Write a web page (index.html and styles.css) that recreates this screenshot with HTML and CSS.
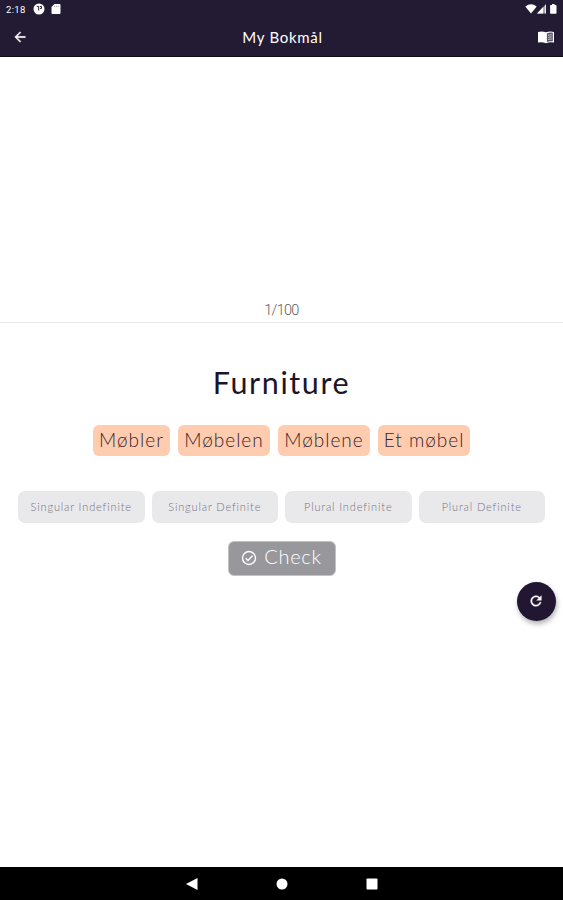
FILE: index.html
```html
<!DOCTYPE html>
<html lang="en">
<head>
    <meta charset="UTF-8">
    <meta name="viewport" content="width=device-width, initial-scale=1.0">
    <title>My Bokmål</title>
    <link rel="stylesheet" href="styles.css">
</head>
<body>
    <header>
        <div class="status-bar">
            <span class="time">2:18</span>
            <svg class="status-app" width="12" height="12" viewBox="0 0 12 12">
                <circle cx="6" cy="6" r="5.5" fill="#fff"/>
                <path d="M3.8 3.4h1.9v4M7 3.4h1.5v2H7" fill="none" stroke="#231a33" stroke-width="1"/>
            </svg>
            <svg class="status-card" width="10" height="12" viewBox="0 0 10 12">
                <path d="M3.4 1H8.6q.9 0 .9 .9v8.2q0 .9-.9 .9H1.4q-.9 0-.9-.9V4z" fill="#fff"/>
                <path d="M3.6 2.6v1.6M5.4 2.6v1.6M7.2 2.6v1.6" stroke="#8b8594" stroke-width=".7"/>
            </svg>
            <svg class="status-signals" width="34" height="12" viewBox="0 0 34 12">
                <path d="M.3 3.4Q6 -1 11.7 3.4L6 10.5z" fill="#fff"/>
                <path d="M21 1v9.5h-9z" fill="#aaa6b0"/>
                <path d="M18 4.2v6.3h-6z" fill="#fff"/>
                <path d="M20.5 2v8.5" stroke="#fff" stroke-width=".7"/>
                <path d="M27 1h2.6v1h1.2q.7 0 .7 .7v7.4q0 .7-.7 .7h-5q-.7 0-.7-.7V2.7q0-.7 .7-.7H27z" fill="#fff"/>
            </svg>
        </div>
        <div class="app-bar">
            <svg width="16" height="16" viewBox="0 0 24 24" fill="#fff" stroke="#fff" stroke-width=".5">
                <path d="M20 11H7.83l5.59-5.59L12 4l-8 8 8 8 1.41-1.41L7.83 13H20z"/>
            </svg>
            <h1>My Bokmål</h1>
            <svg width="18" height="16" viewBox="0 0 18 16">
                <path d="M1 3q4-1.2 8 .2 4-1.4 8-.2v10.6q-4-1-8 .6-4-1.6-8-.6z" fill="#fff"/>
                <path d="M9.9 4.4q3-1.2 5.9-.6v8.5q-3-.5-5.9 .6z" fill="#5c5566"/>
                <path d="M11 6.3q2-.6 3.9-.4M11 8.4q2-.6 3.9-.4M11 10.5q2-.6 3.9-.4" fill="none" stroke="#ddd" stroke-width=".8"/>
            </svg>
        </div>
    </header>

    <main>
        <div class="progress">1/100</div>

        <h2>Furniture</h2>

        <div class="words">
            <span class="word word-short">Møbler</span>
            <span class="word">Møbelen</span>
            <span class="word">Møblene</span>
            <span class="word">Et møbel</span>
        </div>

        <div class="slots">
            <div class="slot">Singular Indefinite</div>
            <div class="slot">Singular Definite</div>
            <div class="slot">Plural Indefinite</div>
            <div class="slot">Plural Definite</div>
        </div>

        <button class="btn-check" type="button">
            <svg width="16" height="16" viewBox="0 0 16 16" fill="none" stroke="#fff" stroke-width="1.4">
                <circle cx="8" cy="8" r="6.5"/>
                <path d="M4.7 8.2l2.3 2.3 4.5-4.7"/>
            </svg>
            <span class="check-label">Check</span>
        </button>

        <button class="btn-refresh" type="button" aria-label="Refresh">
            <svg width="16" height="16" viewBox="0 0 24 24" fill="#fff" stroke="#fff" stroke-width=".6">
                <path d="M17.65 6.35C16.2 4.9 14.21 4 12 4c-4.42 0-8 3.58-8 8s3.58 8 8 8c3.73 0 6.84-2.55 7.73-6h-2.08c-.82 2.33-3.04 4-5.65 4-3.31 0-6-2.69-6-6s2.69-6 6-6c1.66 0 3.14.69 4.22 1.78L13 11h7V4z"/>
            </svg>
        </button>
    </main>

    <footer>
        <svg width="12" height="12" viewBox="0 0 12 12"><path d="M0 6L11.5 0v12z" fill="#fff"/></svg>
        <svg width="12" height="12" viewBox="0 0 12 12"><circle cx="6" cy="6" r="5.5" fill="#fff"/></svg>
        <svg width="12" height="12" viewBox="0 0 12 12"><rect x=".5" y=".5" width="11" height="11" rx=".8" fill="#fff"/></svg>
    </footer>
</body>
</html>
```
FILE: styles.css
```css
* {
    box-sizing: border-box;
}
body {
    font-family: Lato, "Noto Sans", sans-serif;
    display: flex;
    flex-direction: column;
    height: 900px;
    margin: 0;
    background-color: #fff;
    color: #1c1526;
}
svg {
    display: block;
    flex: none;
}
header {
    height: 57px;
    background-color: #231a33;
    border-bottom: 1px solid #0d0915;
    color: #fff;
}
.status-bar {
    display: flex;
    align-items: center;
    height: 18px;
    padding: 0 4px 0 6px;
}
.time {
    width: 27px;
    font: 400 9.5px Roboto, sans-serif;
    letter-spacing: 0.3px;
}
.status-card {
    margin-left: 6px;
}
.status-signals {
    margin-left: auto;
}
.app-bar {
    display: flex;
    align-items: center;
    justify-content: space-between;
    height: 38px;
    padding: 0 8px 0 12px;
}
h1 {
    margin: 0;
    font-size: 15px;
    font-weight: 400;
    line-height: 20px;
    letter-spacing: 0.7px;
}
main {
    position: relative;
    flex: 1;
    display: flex;
    flex-direction: column;
    align-items: center;
}
.progress {
    width: 100%;
    height: 266px;
    padding-top: 245px;
    border-bottom: 1px solid #e8e8e8;
    color: #5c5c5c;
    font: 300 14.5px/18px Roboto, sans-serif;
    letter-spacing: -0.7px;
    text-align: center;
}
h2 {
    margin: 40px 0 0;
    font-size: 30.5px;
    font-weight: 400;
    line-height: 38px;
    letter-spacing: 1.6px;
}
.words {
    display: flex;
    gap: 8px;
    margin-top: 24px;
}
.word {
    width: 92px;
    height: 31px;
    border-radius: 6px;
    background-color: #ffccaf;
    color: #35252b;
    font-size: 19px;
    font-weight: 300;
    line-height: 30px;
    letter-spacing: 1px;
    text-align: center;
    white-space: nowrap;
}
.word-short {
    width: 77px;
}
.slots {
    display: flex;
    gap: 7px;
    width: 527px;
    margin-top: 35px;
}
.slot {
    flex: 1;
    height: 32px;
    border-radius: 7px;
    background-color: #e9e8eb;
    color: #77747c;
    font-size: 11px;
    font-weight: 300;
    line-height: 31px;
    letter-spacing: 0.85px;
    text-align: center;
    white-space: nowrap;
}
button {
    display: flex;
    align-items: center;
    justify-content: center;
    padding: 0;
    border: none;
    cursor: pointer;
}
.btn-check {
    gap: 7px;
    width: 108px;
    height: 35px;
    margin-top: 18px;
    padding-bottom: 2px;
    border: 1px solid #c3c3c5;
    border-radius: 6px;
    background-color: #98979b;
    color: #fff;
    font: 300 20px Lato, sans-serif;
    letter-spacing: 0.7px;
}
.check-label {
    padding-bottom: 3px;
}
.btn-refresh {
    position: absolute;
    top: 525px;
    right: 7px;
    width: 39px;
    height: 39px;
    padding: 0 1px 1px 0;
    border-radius: 50%;
    background-color: #211733;
    box-shadow: 1px 3px 5px rgba(0,0,0,0.3);
}
footer {
    display: flex;
    justify-content: center;
    align-items: center;
    gap: 78px;
    height: 33px;
    background-color: #000;
}
```
